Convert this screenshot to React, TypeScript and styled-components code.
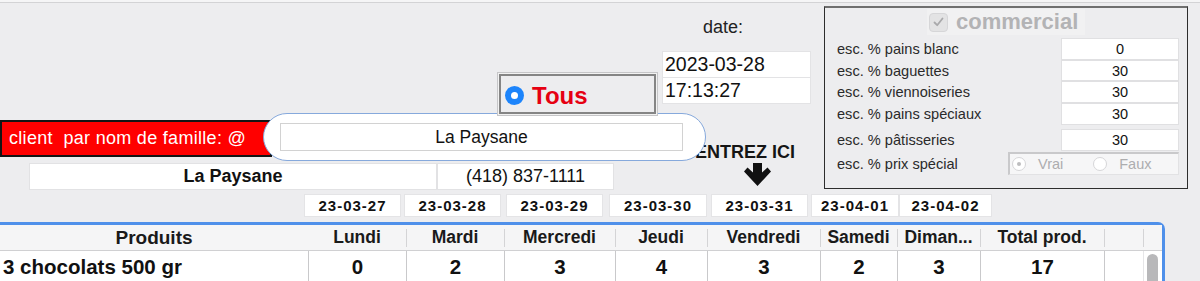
import styled, { createGlobalStyle } from "styled-components";

const GlobalStyle = createGlobalStyle`
  html, body {
    margin: 0;
    padding: 0;
    background: #ededef;
    overflow: hidden;
  }
  body {
    font-family: "Liberation Sans", Arial, sans-serif;
    color: #111;
  }
`;

const Page = styled.div`
  width: 1200px;
  height: 281px;
  overflow: hidden;
`;

const TopRule = styled.div`
  height: 2px;
  background: #f5f5f6;
  border-bottom: 1px solid #d3d3d5;
`;

const Top = styled.div`
  display: grid;
  grid-template-columns: 824px 364px;
  align-items: start;
`;

const LeftArea = styled.div`
  display: flex;
  flex-direction: column;
`;

/* ---------- date / Tous ---------- */

const HeadRow = styled.div`
  height: 110px;
  display: flex;
  align-items: flex-start;
  padding-left: 497px;
`;

const TousBox = styled.label`
  position: relative;
  z-index: 2;
  box-sizing: border-box;
  width: 161px;
  height: 44px;
  margin-top: 69px;
  display: flex;
  align-items: center;
  gap: 8px;
  padding: 3px 0 0 7px;
  background: #ededef;
  border: 1px solid #c6c6c8;
  box-shadow: inset 0 0 0 1px #f2f2f2, inset 0 0 0 3px #858585;
`;

const BlueRadio = styled.span`
  width: 19px;
  height: 19px;
  border-radius: 50%;
  background: #1c84fb;
  display: grid;
  place-items: center;
  &::after {
    content: "";
    width: 7px;
    height: 7px;
    border-radius: 50%;
    background: #fff;
  }
`;

const TousText = styled.span`
  color: #e60012;
  font-weight: 700;
  font-size: 24px;
`;

const DateBlock = styled.div`
  width: 149px;
  margin-left: 4px;
  display: flex;
  flex-direction: column;
`;

const DateLabel = styled.div`
  margin-top: 15px;
  padding-left: 41px;
  font-size: 18px;
  line-height: 18px;
  color: #222;
`;

const DateFields = styled.div`
  margin-top: 15px;
  background: #fff;
  border: 1px solid #e3e3e5;
`;

const DateCell = styled.div<{ $first?: boolean }>`
  height: 25px;
  padding-left: 2px;
  font-size: 19.5px;
  line-height: 25px;
  border-top: ${(p) => (p.$first ? "none" : "1px solid #e3e3e5")};
`;

/* ---------- search ---------- */

const SearchRow = styled.div`
  height: 48px;
  display: flex;
  align-items: flex-start;
`;

const RedLabel = styled.div`
  box-sizing: border-box;
  width: 272px;
  height: 37px;
  margin-top: 7px;
  padding-left: 7px;
  background: #ff0000;
  border: 2px solid #141414;
  color: #fff;
  font-size: 18px;
  letter-spacing: 0.3px;
  line-height: 33px;
  white-space: pre;
`;

const Pill = styled.div`
  position: relative;
  z-index: 1;
  box-sizing: border-box;
  width: 443px;
  height: 48px;
  margin-left: -9px;
  padding: 9px 0 0 16px;
  background: #fff;
  border: 1px solid #86a9dc;
  border-radius: 24px;
`;

const PillField = styled.div`
  box-sizing: border-box;
  width: 403px;
  height: 28px;
  border: 1px solid #d2d2d2;
  text-align: center;
  font-size: 17.5px;
  line-height: 26px;
`;

const Entrez = styled.div`
  margin: 30px 0 0 -11px;
  display: flex;
  flex-direction: column;
`;

const EntrezText = styled.div`
  font-weight: 700;
  font-size: 18px;
  line-height: 18px;
  white-space: nowrap;
  color: #151515;
`;

const Arrow = styled.svg`
  margin: 2px 0 0 49px;
`;

/* ---------- client line ---------- */

const NameRow = styled.div`
  width: 585px;
  height: 27px;
  margin: 2px 0 0 29px;
  display: grid;
  grid-template-columns: 408px 177px;
`;

const NameCell = styled.div<{ $bold?: boolean }>`
  background: #fff;
  border: 1px solid #e2e2e4;
  text-align: center;
  font-size: 18px;
  line-height: 25px;
  font-weight: ${(p) => (p.$bold ? 700 : 400)};
`;

const DayStrip = styled.div`
  width: max-content;
  height: 23px;
  margin-top: 4px;
  padding-left: 304px;
  display: flex;
`;

const DayCell = styled.div<{ $w: number; $gap: number }>`
  flex: none;
  box-sizing: border-box;
  width: ${(p) => p.$w}px;
  margin-left: ${(p) => p.$gap}px;
  background: #fff;
  border: 1px solid #e4e4e6;
  text-align: center;
  font-weight: 700;
  font-size: 15px;
  letter-spacing: 1px;
  line-height: 21px;
  white-space: nowrap;
`;

/* ---------- commercial panel ---------- */

const Panel = styled.div`
  box-sizing: border-box;
  margin-top: 3px;
  height: 183px;
  padding: 1px 8px 0 12px;
  border: 1px solid #2d2d2d;
  border-top: 2px solid #6f6f6f;
  display: flex;
  flex-direction: column;
`;

const CheckRow = styled.div`
  align-self: center;
  height: 26px;
  width: 158px;
  display: flex;
  align-items: center;
  gap: 8px;
  padding-left: 2px;
  box-sizing: border-box;
  background: #f1f1f2;
  margin-left: -4px;
`;

const CheckBox = styled.span`
  width: 17px;
  height: 17px;
  border-radius: 4px;
  background: #e3e3e4;
  border: 1px solid #d6d6d8;
  display: grid;
  place-items: center;
`;

const CheckText = styled.span`
  font-weight: 700;
  font-size: 22px;
  color: #b3b3b5;
`;

const Rate = styled.div<{ $h: number; $mt: number }>`
  height: ${(p) => p.$h}px;
  margin-top: ${(p) => p.$mt}px;
  display: flex;
  align-items: center;
  justify-content: space-between;
`;

const RateLabel = styled.span`
  font-size: 14.6px;
  color: #2a2a2a;
  white-space: nowrap;
`;

const RateField = styled.div`
  box-sizing: border-box;
  width: 118px;
  height: 100%;
  background: #fff;
  border: 1px solid #e0e0e2;
  display: grid;
  place-items: center;
  font-size: 14.5px;
`;

const RadioGroup = styled.div`
  box-sizing: border-box;
  width: 171px;
  height: 100%;
  background: #f6f6f7;
  border: 1px solid #e2e2e4;
  border-top: 2px solid #c9c9cb;
  border-left: 2px solid #c9c9cb;
  display: flex;
  align-items: center;
  padding-left: 2px;
`;

const Option = styled.span<{ $gap: number }>`
  display: flex;
  align-items: center;
  gap: 12px;
  margin-left: ${(p) => p.$gap}px;
  font-size: 14.5px;
  color: #adadaf;
`;

const Dot = styled.span<{ $on?: boolean }>`
  box-sizing: border-box;
  width: 14px;
  height: 14px;
  border-radius: 50%;
  background: #fff;
  border: 1px solid #d6d6d8;
  display: grid;
  place-items: center;
  &::after {
    content: "";
    width: 4px;
    height: 4px;
    border-radius: 50%;
    background: ${(p) => (p.$on ? "#bdbdbf" : "transparent")};
  }
`;

/* ---------- table ---------- */

const cols = "308px 98px 98px 111px 92px 113px 77px 83px 124px 39px 19px";

const Table = styled.div`
  box-sizing: border-box;
  width: 1165px;
  margin-top: 5px;
  background: #fff;
  border-top: 3px solid #4f90ea;
  border-right: 3px solid #4f90ea;
  border-top-right-radius: 7px;
`;

const HeadLine = styled.div`
  display: grid;
  grid-template-columns: ${cols};
  height: 25px;
  background: #f5f5f6;
  border-bottom: 1px solid #d0d0d2;
`;

const HeadCell = styled.div<{ $big?: boolean }>`
  position: relative;
  text-align: center;
  font-weight: 700;
  font-size: ${(p) => (p.$big ? 19 : 17.5)}px;
  line-height: 25px;
  white-space: nowrap;
  color: #1a1a1a;
  & + &::before {
    content: "";
    position: absolute;
    left: 0;
    top: 4px;
    bottom: 3px;
    width: 1px;
    background: #d4d4d6;
  }
`;

const DataLine = styled.div`
  display: grid;
  grid-template-columns: ${cols};
  height: 34px;
`;

const DataCell = styled.div<{ $left?: boolean }>`
  text-align: ${(p) => (p.$left ? "left" : "center")};
  padding-left: ${(p) => (p.$left ? 3 : 0)}px;
  font-weight: 700;
  font-size: 20.5px;
  line-height: 32px;
  white-space: nowrap;
  & + & {
    border-left: 1px solid #c9c9cb;
  }
`;

const ScrollTrack = styled.div`
  border-left: 1px solid #e6e6e8;
  padding: 3px 0 0 3px;
`;

const Thumb = styled.div`
  width: 11px;
  height: 40px;
  border-radius: 6px;
  background: #b8b8ba;
`;

const days = [
  { d: "23-03-27", w: 97, gap: 0 },
  { d: "23-03-28", w: 97, gap: 3 },
  { d: "23-03-29", w: 97, gap: 5 },
  { d: "23-03-30", w: 98, gap: 6 },
  { d: "23-03-31", w: 97, gap: 4 },
  { d: "23-04-01", w: 88, gap: 3 },
  { d: "23-04-02", w: 93, gap: 0 },
];

const rates = [
  { label: "esc. % pains blanc", value: "0", h: 22, mt: 3 },
  { label: "esc. % baguettes", value: "30", h: 21, mt: 0 },
  { label: "esc. % viennoiseries", value: "30", h: 22, mt: 0 },
  { label: "esc. % pains spéciaux", value: "30", h: 22, mt: 0 },
  { label: "esc. % pâtisseries", value: "30", h: 22, mt: 4 },
];

const headers = [
  "Produits",
  "Lundi",
  "Mardi",
  "Mercredi",
  "Jeudi",
  "Vendredi",
  "Samedi",
  "Diman...",
  "Total prod.",
  "",
];

const row = ["3 chocolats 500 gr", "0", "2", "3", "4", "3", "2", "3", "17", ""];

export default function App() {
  return (
    <Page>
      <GlobalStyle />
      <TopRule />
      <Top>
        <LeftArea>
          <HeadRow>
            <TousBox>
              <BlueRadio />
              <TousText>Tous</TousText>
            </TousBox>
            <DateBlock>
              <DateLabel>date:</DateLabel>
              <DateFields>
                <DateCell $first>2023-03-28</DateCell>
                <DateCell>17:13:27</DateCell>
              </DateFields>
            </DateBlock>
          </HeadRow>

          <SearchRow>
            <RedLabel>client  par nom de famille: @</RedLabel>
            <Pill>
              <PillField>La Paysane</PillField>
            </Pill>
            <Entrez>
              <EntrezText>ENTREZ ICI</EntrezText>
              <Arrow width="27" height="23" viewBox="0 0 27 23">
                <path
                  d="M9 0 H18 V9.5 L23.5 4.5 L27 8.5 L13.5 23 L0 8.5 L3.5 4.5 L9 9.5 Z"
                  fill="#111"
                />
              </Arrow>
            </Entrez>
          </SearchRow>

          <NameRow>
            <NameCell $bold>La Paysane</NameCell>
            <NameCell>(418) 837-1111</NameCell>
          </NameRow>

          <DayStrip>
            {days.map((x) => (
              <DayCell key={x.d} $w={x.w} $gap={x.gap}>
                {x.d}
              </DayCell>
            ))}
          </DayStrip>
        </LeftArea>

        <Panel>
          <CheckRow>
            <CheckBox>
              <svg width="11" height="10" viewBox="0 0 11 10">
                <path
                  d="M1.5 5.5 L4.2 8.2 L9.5 1.5"
                  fill="none"
                  stroke="#a9a9ab"
                  strokeWidth="1.8"
                  strokeLinecap="round"
                  strokeLinejoin="round"
                />
              </svg>
            </CheckBox>
            <CheckText>commercial</CheckText>
          </CheckRow>
          {rates.map((r) => (
            <Rate key={r.label} $h={r.h} $mt={r.mt}>
              <RateLabel>{r.label}</RateLabel>
              <RateField>{r.value}</RateField>
            </Rate>
          ))}
          <Rate $h={23} $mt={1}>
            <RateLabel>esc. % prix spécial</RateLabel>
            <RadioGroup>
              <Option $gap={0}>
                <Dot $on />
                Vrai
              </Option>
              <Option $gap={30}>
                <Dot />
                Faux
              </Option>
            </RadioGroup>
          </Rate>
        </Panel>
      </Top>

      <Table>
        <HeadLine>
          {headers.map((h, i) => (
            <HeadCell key={i} $big={i === 0}>
              {h}
            </HeadCell>
          ))}
          <HeadCell />
        </HeadLine>
        <DataLine>
          {row.map((c, i) => (
            <DataCell key={i} $left={i === 0}>
              {c}
            </DataCell>
          ))}
          <ScrollTrack>
            <Thumb />
          </ScrollTrack>
        </DataLine>
      </Table>
    </Page>
  );
}
